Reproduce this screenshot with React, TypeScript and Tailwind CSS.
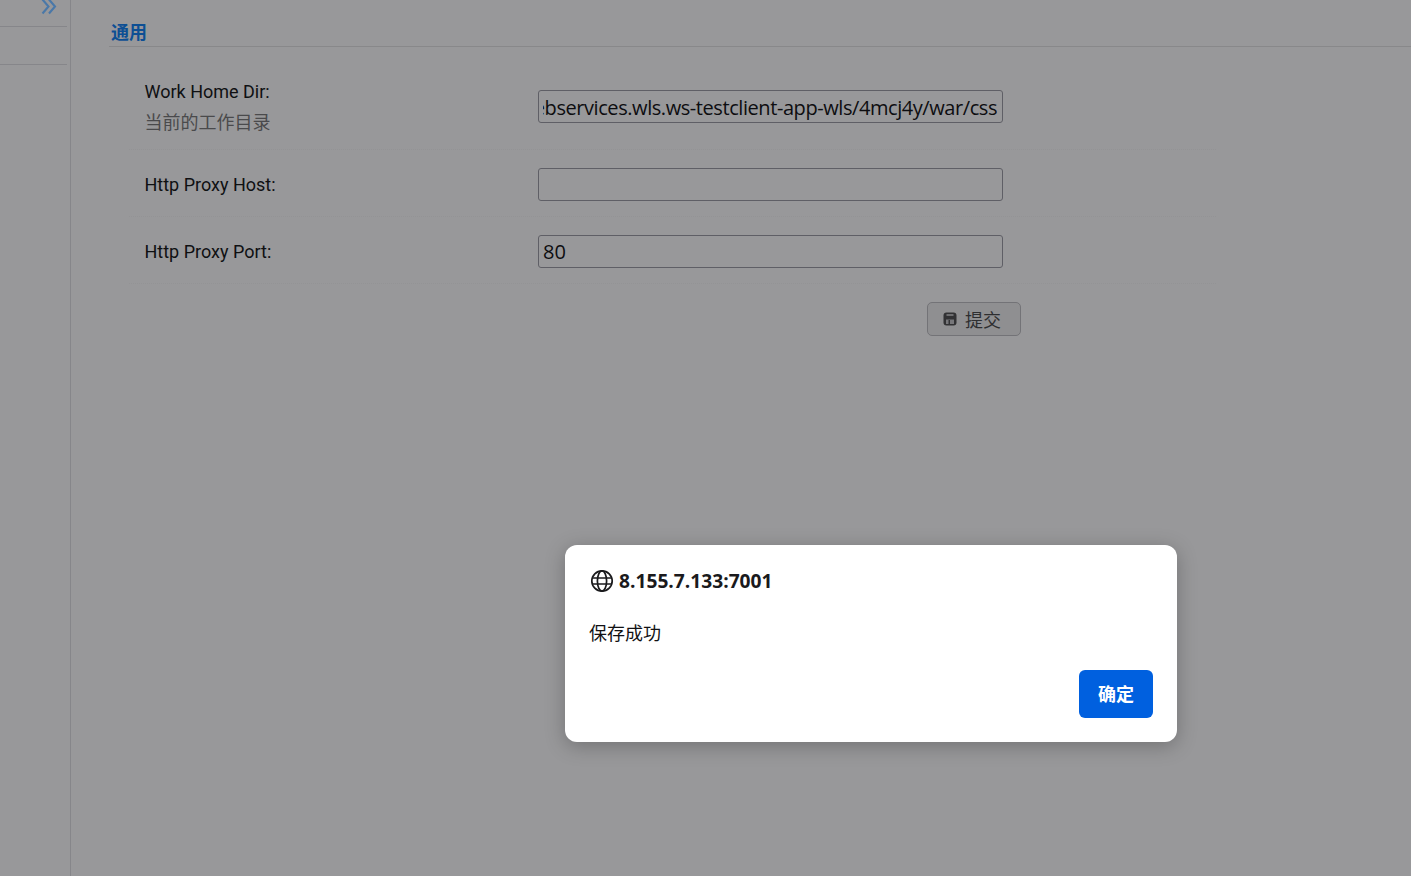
import React from "react";

const cjk = "font-['Open_Sans','Noto_Sans_CJK_SC',sans-serif]";

function Field({ label, sub, value, scrolled }: { label: string; sub?: string; value?: string; scrolled?: boolean }) {
  return (
    <div className={`mb-[1px] ml-[20px] flex w-[1087px] border-b border-dotted border-b-[#939395] ${sub ? "h-[77px]" : "h-[66px]"}`}>
      <div className={`w-[409px] pl-[15.5px] ${sub ? "pt-[3px]" : ""}`}>
        <div className={`text-[18px] text-[#0f1012] font-['Roboto',sans-serif] ${sub ? "leading-[31px]" : "h-[66px] leading-[67px]"}`}>{label}</div>
        {sub && <div className="-mt-[1px] text-[18px] leading-[30px] text-[#4a4a4c] font-['Noto_Sans_CJK_SC',sans-serif]">{sub}</div>}
      </div>
      <div className={`mt-[17px] flex h-[33px] w-[465px] overflow-hidden whitespace-nowrap rounded-[3px] border border-[#5f5f66] pl-[4px] pr-[5px] text-[20px] text-[#0d0d10] font-['Open_Sans',sans-serif] ${scrolled ? "justify-end leading-[33px] tracking-[-0.43px]" : "leading-[31px]"}`}>
        <div className={`flex min-w-0 flex-1 overflow-hidden ${scrolled ? "justify-end" : ""}`}>
          <span className="shrink-0">{value}</span>
        </div>
      </div>
    </div>
  );
}

export default function App() {
  return (
    <div className={`relative flex h-[876px] w-[1411px] overflow-hidden bg-[#98989a] ${cjk}`}>
      <aside className="h-full w-[71px] shrink-0 border-r border-[#86868a]">
        <div className="flex h-[27px] w-[67px] items-start justify-end border-b border-[#86868a] pr-[10px]">
          <svg width="16" height="17" viewBox="0 0 16 17" fill="none" stroke="#4a78a8" strokeWidth="2.1" className="-mt-[2px]">
            <path d="M1.5 1.5 L7.5 8.5 L1.5 15.5" />
            <path d="M8 1.5 L14 8.5 L8 15.5" />
          </svg>
        </div>
        <div className="h-[38px] w-[67px] border-b border-[#86868a]" />
      </aside>
      <main className="min-w-0 flex-1 pl-[38px]">
        <div className="h-[47px] border-b border-[#88888a] pl-[2px] pt-[18px] text-[18px] font-bold leading-[26px] text-[#0d4f94] font-['Noto_Sans_CJK_SC',sans-serif]">
          通用
        </div>
        <div className="pt-[26px]">
          <Field label="Work Home Dir:" sub="当前的工作目录" value="webservices.wls.ws-testclient-app-wls/4mcj4y/war/css" scrolled />
          <Field label="Http Proxy Host:" />
          <Field label="Http Proxy Port:" value="80" />
        </div>
        <div className="w-[912px] pt-[17px]">
          <button className="ml-auto flex h-[34px] w-[94px] items-center rounded-[5px] border border-[#737377] bg-[#8f8f91] pl-[15px] text-[18px] text-[#2e2e30] font-['Noto_Sans_CJK_SC',sans-serif]">
            <svg width="14" height="14" viewBox="0 0 14 14" className="mr-[8px]">
              <rect x="0.5" y="0.5" width="13" height="13" rx="3" fill="#323234" />
              <rect x="3.5" y="2" width="7" height="2" fill="#6e6e70" />
              <rect x="3" y="7.5" width="8" height="4.5" fill="#77777a" />
              <rect x="5.5" y="8" width="1.5" height="4" fill="#323234" />
            </svg>
            提交
          </button>
        </div>
      </main>

      <div className="absolute left-[565px] top-[545px] flex h-[197px] w-[612px] flex-col rounded-[12px] bg-white px-6 pt-6 shadow-[0_4px_20px_rgba(0,0,0,0.25)]">
        <div className="flex h-[24px] items-center text-[#1a1a1c]">
          <svg width="24" height="24" viewBox="0 0 24 24" fill="none" stroke="#1a1a1c" strokeWidth="1.7" className="ml-[0.5px] mr-[5.5px]">
            <circle cx="12" cy="12" r="10.2" />
            <ellipse cx="12" cy="12" rx="4.6" ry="10.2" />
            <path d="M2 9h20M2 15h20" />
          </svg>
          <span className="text-[19.2px] font-bold leading-[24px] font-['Open_Sans',sans-serif]">8.155.7.133:7001</span>
        </div>
        <div className="mt-[25px] text-[18px] leading-[28px] text-[#111113] font-['Noto_Sans_CJK_SC',sans-serif]">保存成功</div>
        <div className="mt-[24px] flex justify-end">
          <button className="h-[48px] w-[74px] rounded-[6px] bg-[#0060df] pb-[2px] text-[18px] font-bold text-white font-['Noto_Sans_CJK_SC',sans-serif]">确定</button>
        </div>
      </div>
    </div>
  );
}
